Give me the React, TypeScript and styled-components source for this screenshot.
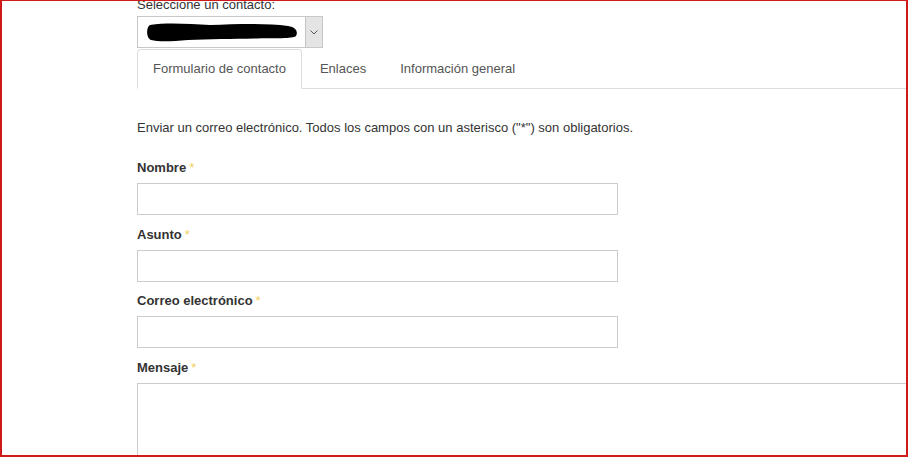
import React from "react";
import styled, { createGlobalStyle } from "styled-components";

const GlobalStyle = createGlobalStyle`
  html, body { margin: 0; padding: 0; background: #fff; }
  body {
    font-family: "Liberation Sans", Arial, Helvetica, sans-serif;
    font-size: 13px;
    color: #333;
  }
  * { box-sizing: border-box; }
`;

const Frame = styled.div`
  width: 908px;
  height: 457px;
  border-style: solid;
  border-color: #d01a1a;
  border-width: 1px 2px 2px 2px;
  overflow: hidden;
  background: #fff;
`;

const Page = styled.div`
  margin-top: -4px;
  padding-left: 135px;
  display: flex;
  flex-direction: column;
  align-items: flex-start;
`;

const SelectLabel = styled.label`
  display: block;
  font-size: 13px;
  line-height: 16px;
  color: #333;
  margin-bottom: 3px;
`;

const SelectBox = styled.div`
  width: 186px;
  height: 32px;
  border: 1px solid #c8c8c8;
  background: #fff;
  display: flex;
  align-items: stretch;
`;

const SelectValue = styled.div`
  flex: 1;
  display: flex;
  align-items: center;
  padding-left: 8px;
`;

const DropButton = styled.div`
  width: 17px;
  background: #e4e4e4;
  border-left: 1px solid #c2c2c2;
  display: flex;
  align-items: center;
  justify-content: center;
`;

const TabList = styled.ul`
  list-style: none;
  margin: 1px 0 0;
  padding: 0;
  display: flex;
  align-self: stretch;
  border-bottom: 1px solid #dddddd;
`;

const Tab = styled.li<{ $active?: boolean }>`
  margin: 0 2px ${(p) => (p.$active ? "-1px" : "0")} 0;
  padding: 10px 15px ${(p) => (p.$active ? "10px" : "9px")};
  line-height: 18px;
  font-size: 13px;
  color: #555;
  border: 1px solid ${(p) => (p.$active ? "#dddddd" : "transparent")};
  border-bottom-color: transparent;
  border-radius: 4px 4px 0 0;
  background: ${(p) => (p.$active ? "#fff" : "transparent")};
  white-space: nowrap;
`;

const TabPanel = styled.div`
  padding-top: 30px;
  display: flex;
  flex-direction: column;
  align-self: stretch;
`;

const Intro = styled.p`
  margin: 0 0 22px;
  font-size: 13px;
  line-height: 18px;
  color: #333;
`;

const Group = styled.div`
  display: flex;
  flex-direction: column;
  margin-bottom: 10.67px;
`;

const FieldLabel = styled.label`
  font-size: 13px;
  line-height: 18px;
  font-weight: bold;
  color: #333;
  margin-bottom: 6px;
`;

const Star = styled.span`
  font-weight: normal;
  color: #f2cf5b;
  margin-left: 3px;
`;

const TextInput = styled.input`
  width: 481px;
  height: 32px;
  border: 1px solid #cccccc;
  border-radius: 0;
  padding: 6px 10px;
  font: inherit;
  outline: none;
  background: #fff;
`;

const MessageArea = styled.textarea`
  width: 800px;
  height: 120px;
  border: 1px solid #cccccc;
  padding: 6px 10px;
  font: inherit;
  resize: none;
  outline: none;
  background: #fff;
`;

const Redaction = () => (
  <svg width="152" height="20" viewBox="0 0 152 20" aria-hidden="true">
    <path
      d="M4,3 C22,0 44,2 64,3 C92,2 120,1 142,4 C151,5 152,11 150,14 C147,17 128,16 108,16.5 C88,17 62,17 42,18 C26,19.5 12,20 5,18 C0,16 0,5 4,3 Z"
      fill="#000"
    />
  </svg>
);

const Chevron = () => (
  <svg width="8" height="5" viewBox="0 0 8 5" aria-hidden="true">
    <path d="M0.5,0.5 L4,4 L7.5,0.5" fill="none" stroke="#555" strokeWidth="1" />
  </svg>
);

const fields = ["Nombre", "Asunto", "Correo electrónico"];

export default function App() {
  return (
    <>
      <GlobalStyle />
      <Frame>
        <Page>
          <SelectLabel>Seleccione un contacto:</SelectLabel>
          <SelectBox>
            <SelectValue>
              <Redaction />
            </SelectValue>
            <DropButton>
              <Chevron />
            </DropButton>
          </SelectBox>
          <TabList>
            <Tab $active>Formulario de contacto</Tab>
            <Tab>Enlaces</Tab>
            <Tab>Información general</Tab>
          </TabList>
          <TabPanel>
            <Intro>
              Enviar un correo electrónico. Todos los campos con un asterisco ("*") son obligatorios.
            </Intro>
            {fields.map((f) => (
              <Group key={f}>
                <FieldLabel>
                  {f}
                  <Star>*</Star>
                </FieldLabel>
                <TextInput type="text" />
              </Group>
            ))}
            <Group>
              <FieldLabel>
                Mensaje
                <Star>*</Star>
              </FieldLabel>
              <MessageArea />
            </Group>
          </TabPanel>
        </Page>
      </Frame>
    </>
  );
}
